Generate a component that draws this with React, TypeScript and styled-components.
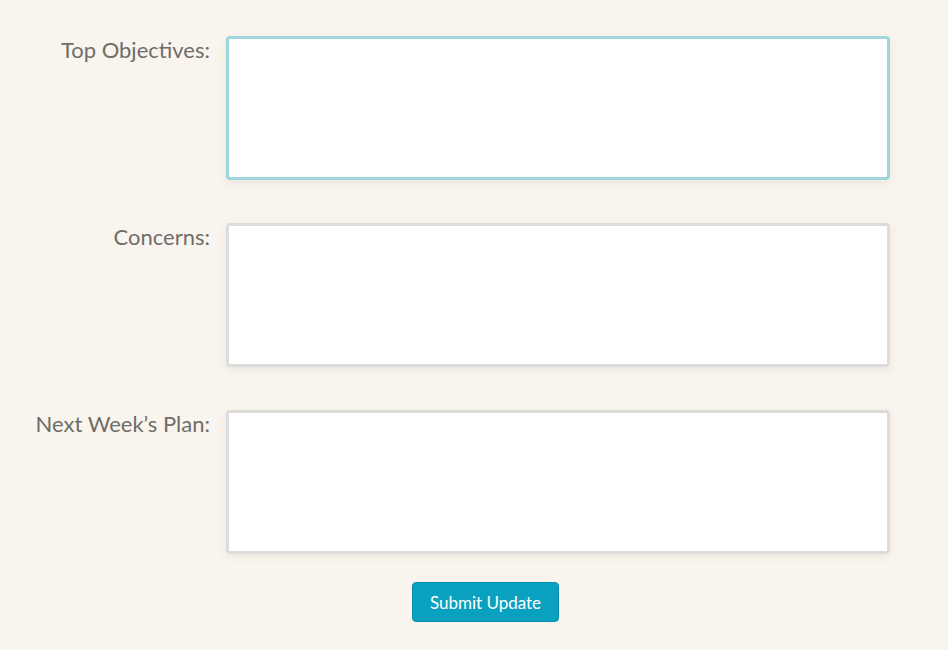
import React from "react";
import styled, { createGlobalStyle } from "styled-components";

const GlobalStyle = createGlobalStyle`
  html, body {
    margin: 0;
    padding: 0;
    background: #f9f5ee;
  }
  body {
    font-family: Lato, "Open Sans", sans-serif;
  }
`;

const Page = styled.div`
  width: 948px;
  height: 650px;
  padding-top: 36px;
  box-sizing: border-box;
`;

const Form = styled.form`
  display: grid;
  grid-template-columns: 210px 664px;
  column-gap: 16px;
  row-gap: 43px;
  align-items: start;
`;

const Label = styled.label`
  text-align: right;
  font-size: 22px;
  line-height: 24px;
  color: #6f6d68;
  padding-top: 2px;
`;

const TextArea = styled.textarea<{ $focused?: boolean }>`
  display: block;
  width: 664px;
  height: 144px;
  box-sizing: border-box;
  margin: 0;
  background: #ffffff;
  border: 3px solid ${(p) => (p.$focused ? "#9fd6dd" : "#dcdcdb")};
  border-radius: 4px;
  box-shadow: 0 3px 8px rgba(120, 100, 70, 0.1);
  resize: none;
  outline: none;
  font-family: inherit;
  font-size: 16px;
`;

const Actions = styled.div`
  display: flex;
  justify-content: center;
  padding-left: 23px;
  margin-top: 28px;
`;

const Button = styled.button`
  width: 147px;
  height: 40px;
  background: #0aa1c1;
  border: 1px solid #0790ad;
  border-radius: 4px;
  color: #ffffff;
  font-family: inherit;
  font-size: 17px;
  cursor: pointer;
`;

const fields = [
  { id: "objectives", label: "Top Objectives:", focused: true },
  { id: "concerns", label: "Concerns:" },
  { id: "plan", label: "Next Week’s Plan:" },
];

export default function App() {
  return (
    <>
      <GlobalStyle />
      <Page>
        <Form>
          {fields.map((f) => (
            <React.Fragment key={f.id}>
              <Label htmlFor={f.id}>{f.label}</Label>
              <TextArea id={f.id} $focused={f.focused} />
            </React.Fragment>
          ))}
        </Form>
        <Actions>
          <Button type="button">Submit Update</Button>
        </Actions>
      </Page>
    </>
  );
}
